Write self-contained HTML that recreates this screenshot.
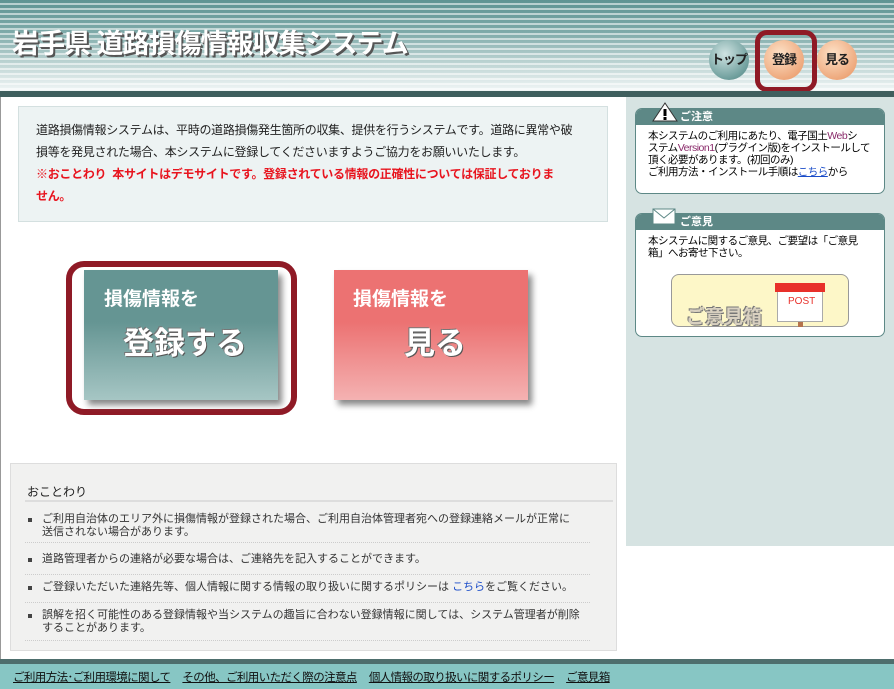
<!DOCTYPE html>
<html><head><meta charset="utf-8"><style>
*{margin:0;padding:0;box-sizing:border-box}
body{width:894px;height:689px;overflow:hidden;background:#fff;font-family:"Liberation Sans","Noto Sans CJK JP",sans-serif;position:relative}
.abs{position:absolute}
#hdr{left:0;top:0;width:894px;height:92px;background:
repeating-linear-gradient(180deg,rgba(255,255,255,0) 0 3px,rgba(255,255,255,.55) 3px 5px),
linear-gradient(180deg,#5f9493 0%,#7eaaa9 35%,#b7d0cf 65%,#f2f7f7 100%)}
#title{left:12px;top:22px;font-size:27px;font-weight:bold;color:#fff;letter-spacing:-1px;text-shadow:2px 2px 0 #555,1px 1px 0 #777}
.c{width:40px;height:40px;border-radius:50%;font-size:13px;font-weight:bold;color:#222;text-align:center;line-height:40px;letter-spacing:-1px}
#bar{left:0;top:91px;width:894px;height:6px;background:#3f5f5e}
#side{left:626px;top:97px;width:268px;height:449px;background:#d6e3e2}
.card{background:#fff;border:1px solid #5d8886;border-radius:7px;overflow:hidden}
.ch{background:#5d8886;color:#fff;font-size:11px;font-weight:bold;height:16px;line-height:16px;padding-left:44px}
.cb{font-size:10.5px;line-height:12px;color:#000;padding:5px 0 0 12px;letter-spacing:-0.5px}
#info{left:18px;top:106px;width:590px;height:116px;background:#edf3f3;border:1px solid #d4e0e0;font-size:12px;line-height:22px;padding:12px 0 0 17px;color:#222;letter-spacing:-0.3px}
#foot1{left:0;top:659px;width:894px;height:5px;background:#4e6e6d}
#foot{left:0;top:664px;width:894px;height:25px;background:#87c6c4;font-size:11.5px;letter-spacing:-0.6px;padding:5px 0 0 13px;color:#111;white-space:nowrap}
#foot span{text-decoration:underline;margin-right:12px}
#note{left:10px;top:463px;width:607px;height:188px;background:#f1f1f0;border:1px solid #ddd}
.li{position:absolute;left:14px;width:565px;font-size:11px;line-height:13px;color:#333;padding-left:17px;border-bottom:1px dotted #ccc}
.li:before{content:"";position:absolute;left:3px;top:5px;width:4px;height:4px;background:#444}
</style></head><body>
<div id="hdr" class="abs"></div>
<div id="title" class="abs">岩手県 道路損傷情報収集システム</div>
<div class="abs c" style="left:709px;top:40px;background:radial-gradient(circle at 40% 35%,#cfe3e2,#6f9f9d 70%,#4f807e)">トップ</div>
<div class="abs c" style="left:764px;top:40px;background:radial-gradient(circle at 40% 35%,#fde2c8,#eda578 75%)">登録</div>
<div class="abs c" style="left:817px;top:40px;background:radial-gradient(circle at 40% 35%,#fde2c8,#eda578 75%)">見る</div>
<div class="abs" style="left:755px;top:30px;width:62px;height:62px;border:5px solid #8f1a26;border-radius:12px"></div>
<div id="bar" class="abs"></div>
<div class="abs" style="left:0;top:97px;width:1px;height:562px;background:#999"></div>

<div id="info" class="abs">道路損傷情報システムは、平時の道路損傷発生箇所の収集、提供を行うシステムです。道路に異常や破<br>損等を発見された場合、本システムに登録してくださいますようご協力をお願いいたします。<br><b style="color:#e8141e">※おことわり&nbsp; 本サイトはデモサイトです。登録されている情報の正確性については保証しておりま<br>せん。</b></div>

<div class="abs" style="left:66px;top:261px;width:231px;height:154px;border:6px solid #8f1a26;border-radius:18px"></div>
<div class="abs" style="left:84px;top:270px;width:194px;height:130px;background:linear-gradient(180deg,#659593 0%,#659593 40%,#a6c6c4 100%);box-shadow:4px 5px 6px #888"></div>
<div class="abs" style="left:104px;top:284px;font-size:19px;font-weight:bold;color:#fff">損傷情報を</div>
<div class="abs" style="left:123px;top:318px;font-size:31px;font-weight:bold;color:#fff;text-shadow:1px 1px 0 #555,-1px -1px 0 #777">登録する</div>
<div class="abs" style="left:334px;top:270px;width:194px;height:130px;background:linear-gradient(180deg,#ec7272 0%,#ec7272 40%,#f4b2b2 100%);box-shadow:4px 5px 6px #888"></div>
<div class="abs" style="left:353px;top:284px;font-size:19px;font-weight:bold;color:#fff">損傷情報を</div>
<div class="abs" style="left:404px;top:318px;font-size:31px;font-weight:bold;color:#fff;text-shadow:1px 1px 0 #555,-1px -1px 0 #777">見る</div>

<div id="side" class="abs"></div>
<div class="abs card" style="left:635px;top:108px;width:250px;height:86px">
<div class="ch">ご注意</div>
<div class="cb">本システムのご利用にあたり、電子国土<span style="color:#8a2a6a">Web</span>シ<br>ステム<span style="color:#8a2a6a">Version1</span>(プラグイン版)をインストールして<br>頂く必要があります。(初回のみ)<br>ご利用方法・インストール手順は<span style="color:#1a4cc8;text-decoration:underline">こちら</span>から</div>
</div>
<svg class="abs" style="left:652px;top:102px" width="26" height="20"><polygon points="13,1 25,19 1,19" fill="#fff" stroke="#333"/><rect x="11.5" y="7" width="3" height="7" fill="#000"/><rect x="11.5" y="15" width="3" height="3" fill="#000"/></svg>
<div class="abs card" style="left:635px;top:213px;width:250px;height:124px">
<div class="ch">ご意見</div>
<div class="cb">本システムに関するご意見、ご要望は「ご意見<br>箱」へお寄せ下さい。</div>
</div>
<svg class="abs" style="left:652px;top:208px" width="24" height="18"><rect x="1" y="1" width="22" height="15" fill="#fff" stroke="#5d8886"/><polyline points="1,1 12,10 23,1" fill="none" stroke="#5d8886"/></svg>
<div class="abs" style="left:671px;top:274px;width:178px;height:53px;background:#fdf7c8;border:1px solid #999;border-radius:8px"></div>
<div class="abs" style="left:686px;top:302px;font-size:19px;font-weight:bold;color:#d8d0c0;text-shadow:1px 1px 0 #777,-1px -1px 0 #777">ご意見箱</div>
<div class="abs" style="left:777px;top:288px;width:46px;height:34px;background:#fff;border:1px solid #aaa"></div>
<div class="abs" style="left:775px;top:283px;width:50px;height:9px;background:#e8302a"></div>
<div class="abs" style="left:798px;top:322px;width:5px;height:5px;background:#b5734c"></div>
<div class="abs" style="left:788px;top:296px;font-size:10px;color:#e8302a">POST</div>

<div id="note" class="abs">
<div class="abs" style="left:16px;top:19px;font-size:12px;color:#222">おことわり</div>
<div class="abs" style="left:14px;top:36px;width:588px;height:2px;background:#ddd"></div>
<div class="li" style="top:49px;height:30px">ご利用自治体のエリア外に損傷情報が登録された場合、ご利用自治体管理者宛への登録連絡メールが正常に<br>送信されない場合があります。</div>
<div class="li" style="top:89px;height:22px">道路管理者からの連絡が必要な場合は、ご連絡先を記入することができます。</div>
<div class="li" style="top:117px;height:22px">ご登録いただいた連絡先等、個人情報に関する情報の取り扱いに関するポリシーは <span style="color:#1a4cc8">こちら</span>をご覧ください。</div>
<div class="li" style="top:145px;height:32px">誤解を招く可能性のある登録情報や当システムの趣旨に合わない登録情報に関しては、システム管理者が削除<br>することがあります。</div>
</div>

<div id="foot1" class="abs"></div>
<div id="foot" class="abs"><span>ご利用方法･ご利用環境に関して</span><span>その他、ご利用いただく際の注意点</span><span>個人情報の取り扱いに関するポリシー</span><span>ご意見箱</span></div>
</body></html>
